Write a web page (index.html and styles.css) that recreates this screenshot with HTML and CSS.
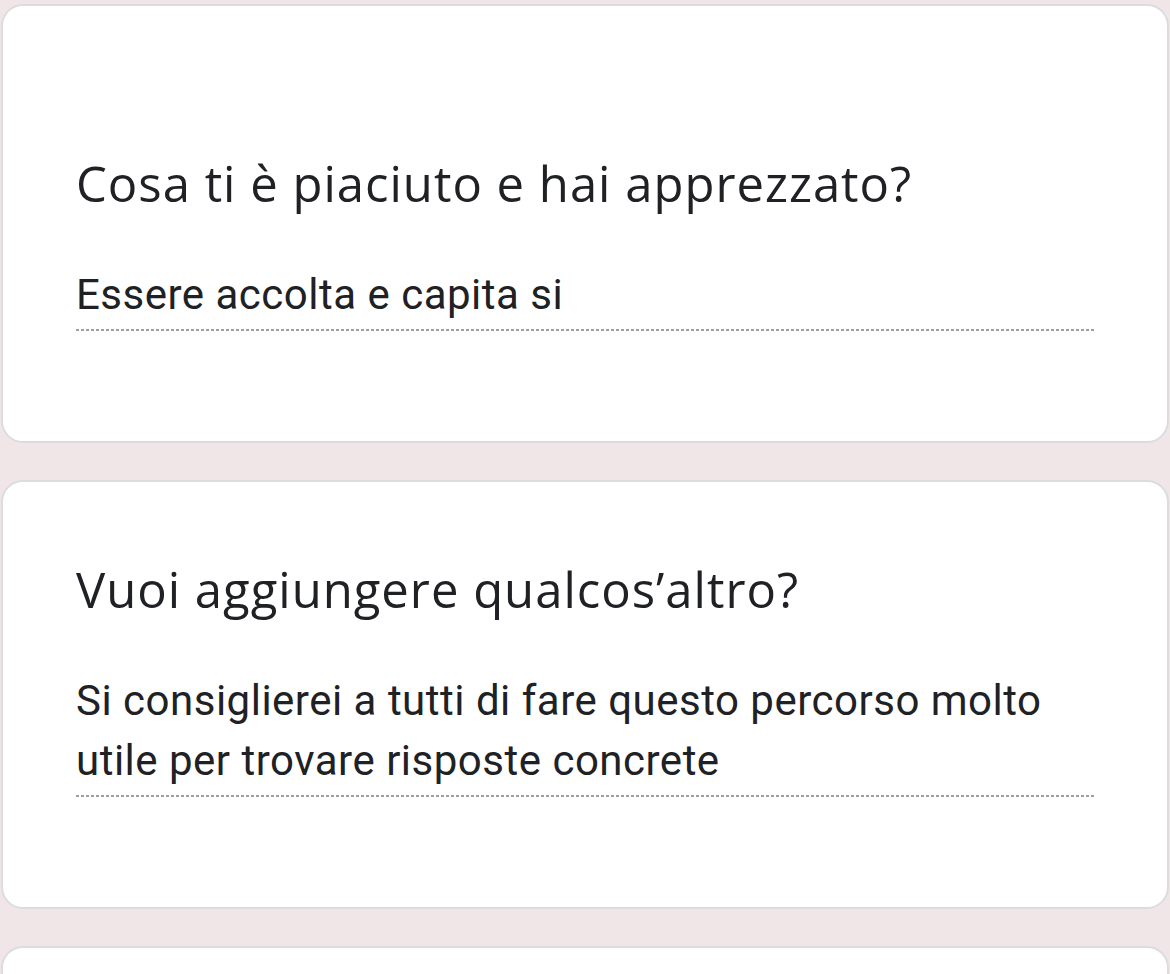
FILE: index.html
```html
<!DOCTYPE html>
<html lang="it">
<head>
<meta charset="utf-8">
<title>Modulo</title>
<link rel="stylesheet" href="styles.css">
</head>
<body>
<main class="page">
  <section class="card card-first">
    <h2 class="question">Cosa ti è piaciuto e hai apprezzato?</h2>
    <div class="answer">Essere accolta e capita si</div>
  </section>
  <section class="card">
    <h2 class="question">Vuoi aggiungere qualcos’altro?</h2>
    <div class="answer">Si consiglierei a tutti di fare questo percorso molto utile per trovare risposte concrete</div>
  </section>
  <section class="card card-next"></section>
</main>
</body>
</html>
```

FILE: styles.css
```css
html, body {
  margin: 0;
  padding: 0;
  background: #f0e6e8;
}
.page {
  display: flex;
  flex-direction: column;
  gap: 37px;
  padding: 4px 1px 0 1px;
  height: 974px;
  box-sizing: border-box;
  overflow: hidden;
}
.card {
  background: #ffffff;
  border: 2px solid #dadce0;
  border-radius: 22px;
  padding: 75px 72px 110px 73px;
  flex-shrink: 0;
}
.card-first {
  padding-top: 145px;
}
.card-next {
  height: 200px;
}
.question {
  margin: 0;
  font-family: "Open Sans", "Noto Sans", sans-serif;
  font-weight: 400;
  font-size: 49px;
  line-height: 64px;
  color: #202124;
  letter-spacing: 1px;
}
.answer {
  margin-top: 50px;
  font-family: Roboto, "Noto Sans", sans-serif;
  font-size: 42px;
  line-height: 60px;
  letter-spacing: 0.5px;
  color: #202124;
  background-image: repeating-linear-gradient(to right, #9aa0a6 0 3px, transparent 3px 5px);
  background-size: 100% 2px;
  background-repeat: no-repeat;
  background-position: left bottom;
  padding-bottom: 6px;
}
```
